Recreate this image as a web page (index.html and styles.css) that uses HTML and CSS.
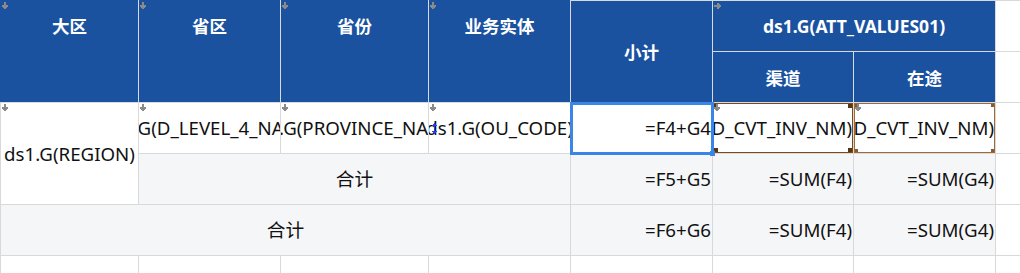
FILE: index.html
```html
<!DOCTYPE html>
<html lang="zh-CN">
<head>
<meta charset="utf-8">
<title>Report template</title>
<link rel="stylesheet" href="styles.css">
</head>
<body>
<table class="sheet">
  <colgroup>
    <col class="c138"><col class="c142"><col class="c148"><col class="c142"><col class="c142"><col class="c141"><col class="c142"><col class="crest">
  </colgroup>
  <thead>
    <tr class="hrow">
      <th rowspan="2" class="htop"><span class="mk mk-down"></span>大区</th>
      <th rowspan="2" class="htop"><span class="mk mk-down"></span>省区</th>
      <th rowspan="2" class="htop"><span class="mk mk-down"></span>省份</th>
      <th rowspan="2" class="htop"><span class="mk mk-down"></span>业务实体</th>
      <th rowspan="2" class="hmid hline">小计</th>
      <th colspan="2" class="hline"><span class="mk mk-right"></span>ds1.G(ATT_VALUES01)</th>
      <td class="blank"></td>
    </tr>
    <tr class="hrow">
      <th>渠道</th>
      <th>在途</th>
      <td class="blank"></td>
    </tr>
  </thead>
  <tbody>
    <tr class="row">
      <td rowspan="2" class="white"><span class="mk mk-down"></span><div class="fit center">ds1.G(REGION)</div></td>
      <td class="white"><span class="mk mk-down"></span><div class="fit center">ds1.G(D_LEVEL_4_NAME)</div></td>
      <td class="white"><span class="mk mk-down"></span><div class="fit center">ds1.G(PROVINCE_NAME)</div></td>
      <td class="white"><span class="mk mk-down"></span><span class="mk mk-updown"></span><div class="fit center">ds1.G(OU_CODE)</div></td>
      <td class="white sel"><div class="fit right">=F4+G4</div></td>
      <td class="white pick pick-dark"><span class="mk mk-down"></span><div class="fit right">ds1.G(PROD_CVT_INV_NM)</div></td>
      <td class="white pick pick-light"><span class="mk mk-down"></span><div class="fit right">ds1.G(PROD_CVT_INV_NM)</div></td>
      <td class="blank"></td>
    </tr>
    <tr class="row grey">
      <td colspan="3"><div class="fit center">合计</div></td>
      <td><div class="fit right">=F5+G5</div></td>
      <td><div class="fit right">=SUM(F4)</div></td>
      <td><div class="fit right">=SUM(G4)</div></td>
      <td class="blank"></td>
    </tr>
    <tr class="row grey">
      <td colspan="4"><div class="fit center">合计</div></td>
      <td><div class="fit right">=F6+G6</div></td>
      <td><div class="fit right">=SUM(F4)</div></td>
      <td><div class="fit right">=SUM(G4)</div></td>
      <td class="blank"></td>
    </tr>
    <tr class="row">
      <td></td><td></td><td></td><td></td><td></td><td></td><td></td><td class="blank"></td>
    </tr>
  </tbody>
</table>
</body>
</html>
```

FILE: styles.css
```css
html, body {
  margin: 0;
  padding: 0;
  background: #ffffff;
}

body {
  width: 1020px;
  height: 273px;
  overflow: hidden;
  font-family: "Noto Sans", "Noto Sans CJK SC", sans-serif;
}

.sheet {
  border-collapse: collapse;
  table-layout: fixed;
  width: 1020px;
}

.c138 { width: 138px; }
.c142 { width: 142px; }
.c148 { width: 148px; }
.c141 { width: 141px; }
.crest { width: 25px; }

.sheet th,
.sheet td {
  position: relative;
  padding: 0;
  border: 1px solid #d9d9d9;
  white-space: nowrap;
}

.hrow {
  height: 51px;
}

.sheet th {
  background: #1b529f;
  color: #ffffff;
  font-family: "Noto Sans", "Noto Sans CJK SC", sans-serif;
  font-weight: 700;
  font-size: 17.5px;
  text-align: center;
  vertical-align: middle;
  border-color: #d6dbe3;
  border-top-color: #1b529f;
  overflow: hidden;
}

.sheet th.hline {
  border-top-color: #d6dbe3;
}

.sheet th.htop {
  vertical-align: top;
  padding-top: 13px;
  line-height: 24px;
  border-left-color: #d6dbe3;
}

.sheet thead tr:first-child th:first-child {
  border-left-color: #1b529f;
}

.row {
  height: 51px;
}

.row td {
  font-size: 18.7px;
  color: #111111;
  vertical-align: middle;
}

.white {
  background: #ffffff;
}

.grey td {
  background: #f5f6f8;
}

.grey td.blank,
.blank {
  background: #ffffff;
}

.fit {
  display: flex;
  overflow: hidden;
  white-space: nowrap;
  line-height: 26px;
}

.fit.center {
  justify-content: center;
}

.fit.right {
  justify-content: flex-end;
  padding-right: 1px;
}

/* selected cell */
.sel::after {
  content: "";
  position: absolute;
  left: -1px;
  top: -1px;
  right: -2px;
  bottom: -2px;
  border: 3px solid #3a86e6;
  pointer-events: none;
  z-index: 2;
}

.sel::before {
  content: "";
  position: absolute;
  right: -3px;
  bottom: -3px;
  width: 5px;
  height: 5px;
  background: #3a86e6;
  z-index: 3;
}

/* brown range boxes */
.pick::after {
  content: "";
  position: absolute;
  left: 0;
  top: 0;
  right: 0;
  bottom: 0;
  border: 1.5px solid #7a4a1c;
  background:
    linear-gradient(#5b3510, #5b3510) left top / 4px 4px no-repeat,
    linear-gradient(#5b3510, #5b3510) right top / 4px 4px no-repeat,
    linear-gradient(#5b3510, #5b3510) left bottom / 4px 4px no-repeat,
    linear-gradient(#5b3510, #5b3510) right bottom / 4px 4px no-repeat;
  pointer-events: none;
  z-index: 1;
}

.pick-light::after {
  border-color: #9c6b3c;
  background:
    linear-gradient(#8a5a2c, #8a5a2c) left top / 3px 3px no-repeat,
    linear-gradient(#8a5a2c, #8a5a2c) right top / 3px 3px no-repeat,
    linear-gradient(#8a5a2c, #8a5a2c) left bottom / 3px 3px no-repeat,
    linear-gradient(#8a5a2c, #8a5a2c) right bottom / 3px 3px no-repeat;
}

/* small expand markers */
.mk {
  position: absolute;
  display: block;
  z-index: 3;
}

.mk-down {
  left: 1px;
  top: 1px;
  width: 6px;
  height: 7px;
  background:
    linear-gradient(#8a8a8a, #8a8a8a) 2px 0 / 2px 4px no-repeat,
    linear-gradient(#8a8a8a, #8a8a8a) 0 3px / 6px 2px no-repeat,
    linear-gradient(#8a8a8a, #8a8a8a) 1px 5px / 4px 1px no-repeat,
    linear-gradient(#8a8a8a, #8a8a8a) 2px 6px / 2px 1px no-repeat;
}

.mk-right {
  left: 1px;
  top: 2px;
  width: 7px;
  height: 6px;
  background:
    linear-gradient(#8a8a8a, #8a8a8a) 0 2px / 4px 2px no-repeat,
    linear-gradient(#8a8a8a, #8a8a8a) 3px 0 / 2px 6px no-repeat,
    linear-gradient(#8a8a8a, #8a8a8a) 5px 1px / 1px 4px no-repeat,
    linear-gradient(#8a8a8a, #8a8a8a) 6px 2px / 1px 2px no-repeat;
}

.mk-updown {
  left: 3px;
  top: 20px;
  width: 5px;
  height: 11px;
  background:
    linear-gradient(#2a3cf0, #2a3cf0) 2px 0 / 1px 11px no-repeat,
    linear-gradient(#2a3cf0, #2a3cf0) 0 2px / 5px 1px no-repeat,
    linear-gradient(#2a3cf0, #2a3cf0) 1px 1px / 3px 1px no-repeat,
    linear-gradient(#2a3cf0, #2a3cf0) 0 8px / 5px 1px no-repeat,
    linear-gradient(#2a3cf0, #2a3cf0) 1px 9px / 3px 1px no-repeat;
}
```
